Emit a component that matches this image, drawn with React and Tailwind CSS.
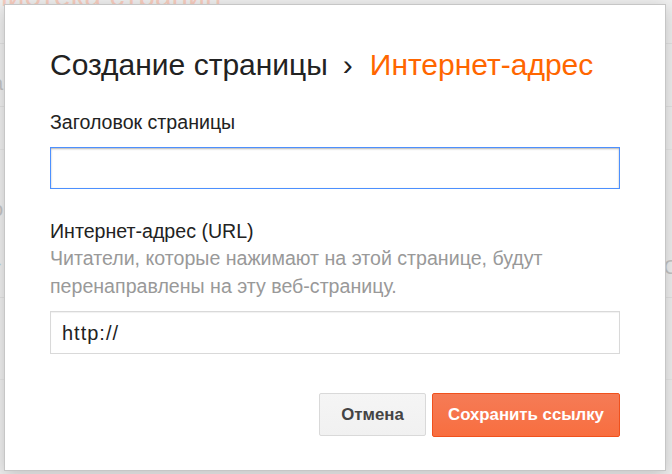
import React from 'react';

const font = "font-['Liberation_Sans',Arial,sans-serif]";

// Faded page that sits behind the modal
const BackgroundPage = () => (
    <div className="flex flex-col h-full bg-[#efefef] text-[20px] text-[#c4c4c4] whitespace-nowrap">
        <div className="-mt-[22px] -ml-[62px] text-[30px] leading-[36px] text-[#f7cdbf]">Библиотека страниц</div>
        <div className="h-[30px] border-b border-[#e2e2e2]" />
        <div className="h-[63px] border-b border-[#e2e2e2] flex items-end -ml-[8px] pb-[8px]">а</div>
        <div className="h-[43px] border-b border-[#e6e6e6]" />
        <div className="flex justify-between h-[148px] border-b border-[#e2e2e2] pt-[44px]">
            <div className="flex flex-col -ml-[8px] gap-[26px]">
                <span>о</span>
                <span className="-ml-[2px] text-[#b9d6e0]">+</span>
            </div>
            <span className="-mr-[6px] mt-[58px]">С</span>
        </div>
        <div className="h-[82px] border-b border-[#e6e6e6]" />
    </div>
);

const Field = ({ label, hint, value, focused }) => (
    <div className="flex flex-col">
        <label className="text-[19.6px] leading-[26px] text-[#222]">{label}</label>
        {hint && <p className="text-[19.6px] leading-[28px] text-[#999]">{hint}</p>}
        <div
            className={
                focused
                    ? 'mt-[12px] h-[42px] border border-[#4d90fe] shadow-[inset_0_1px_2px_rgba(0,0,0,0.3)] bg-white'
                    : 'mt-[11px] h-[43px] border border-[#d9d9d9] shadow-[inset_0_1px_1px_rgba(0,0,0,0.06)] bg-white flex items-center px-[11px]'
            }
        >
            {value && <span className="text-[20px] tracking-[1px] text-[#222]">{value}</span>}
        </div>
    </div>
);

export default function App() {
    return (
        <div className={`relative w-[672px] h-[474px] overflow-hidden ${font}`}>
            <BackgroundPage />

            {/* Modal */}
            <div className="absolute left-[4px] top-[4px] w-[662px] h-[467px] bg-white border border-[#c6c6c6] shadow-[0_4px_16px_rgba(0,0,0,0.2)] px-[45px] pt-[40px] flex flex-col">
                <h1 className="text-[30px] leading-[40px] text-[#222] whitespace-nowrap">
                    Создание страницы
                    <span className="ml-[15px] mr-[17px]">›</span>
                    <span className="text-[#ff6600]">Интернет-адрес</span>
                </h1>

                <div className="mt-[24px]">
                    <Field label="Заголовок страницы" focused />
                </div>

                <div className="mt-[29px]">
                    <Field
                        label="Интернет-адрес (URL)"
                        hint="Читатели, которые нажимают на этой странице, будут перенаправлены на эту веб-страницу."
                        value="http://"
                    />
                </div>

                <div className="mt-[39px] flex justify-end gap-[6px]">
                    <button className="h-[43px] w-[107px] rounded-[2px] border border-[#d9d9d9] bg-gradient-to-b from-[#f5f5f5] to-[#f1f1f1] text-[16.8px] font-bold text-[#444]">
                        Отмена
                    </button>
                    <button className="h-[44px] w-[188px] rounded-[2px] border border-[#f0511d] bg-gradient-to-b from-[#f57b56] to-[#f86e3f] text-[16.8px] font-bold text-white">
                        Сохранить ссылку
                    </button>
                </div>
            </div>
        </div>
    );
}
